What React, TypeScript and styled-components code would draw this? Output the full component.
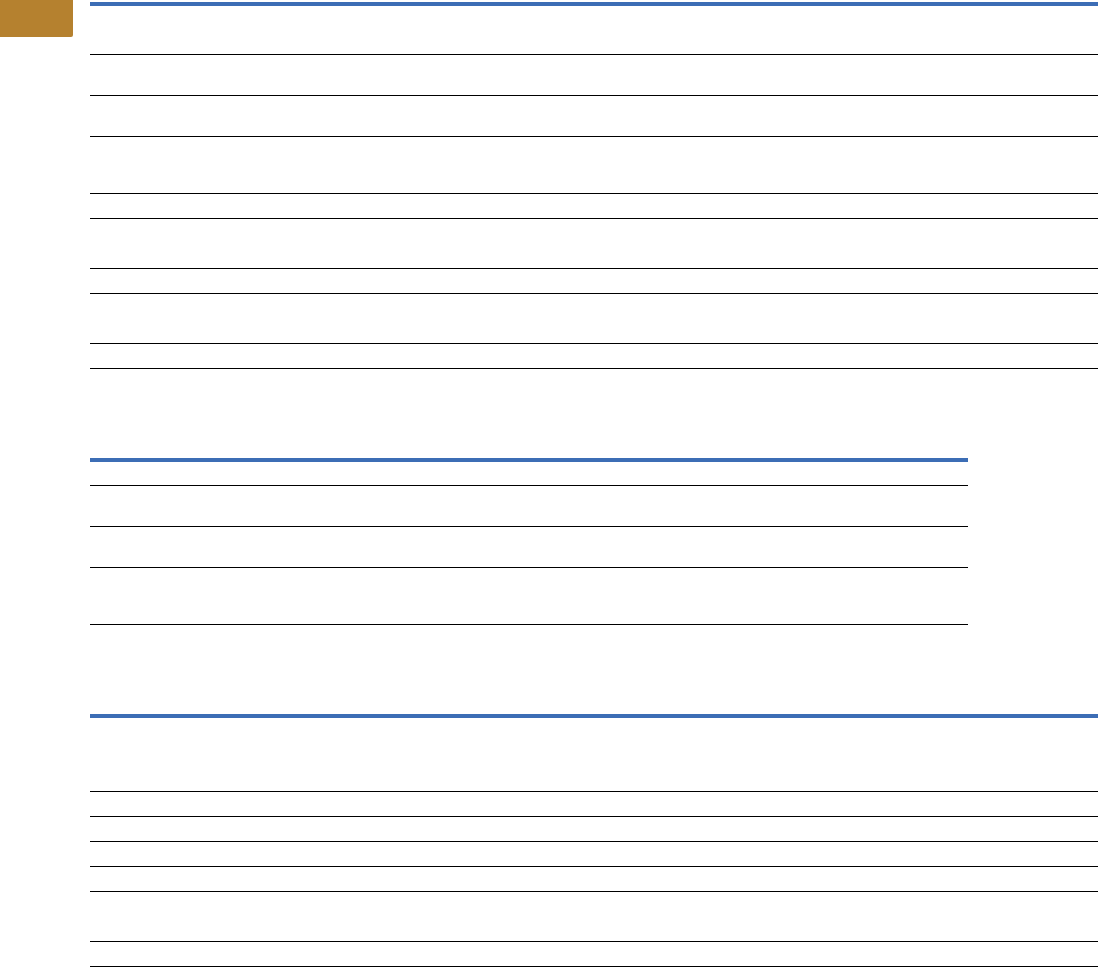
import styled, { createGlobalStyle } from 'styled-components';

const GlobalStyle = createGlobalStyle`
	html, body {
		margin: 0;
		padding: 0;
		background: #ffffff;
		font-family: 'Liberation Sans', Arial, sans-serif;
	}
`;

const tables: { width: number; header: number; rows: number[] }[] = [
	{ width: 1008, header: 48, rows: [40, 40, 56, 24, 49, 24, 49, 24] },
	{ width: 878, header: 23, rows: [40, 40, 56] },
	{ width: 1008, header: 73, rows: [24, 24, 24, 24, 49, 24] },
];

export default function App() {
	return (
		<Page>
			<GlobalStyle />
			<Aside>
				<Tab />
			</Aside>
			<Main>
				{tables.map((t, i) => (
					<Table key={i} $width={t.width}>
						<HeaderRow $height={t.header} />
						{t.rows.map((h, j) => (
							<Row key={j} $height={h} />
						))}
					</Table>
				))}
			</Main>
		</Page>
	);
}

const Page = styled.div`
	display: flex;
	width: 1098px;
	min-height: 967px;
`;

const Aside = styled.div`
	width: 90px;
	flex-shrink: 0;
`;

const Tab = styled.div`
	width: 73px;
	height: 37px;
	background-color: #b5812f;
	border-bottom-right-radius: 2px;
`;

const Main = styled.div`
	display: flex;
	flex-direction: column;
	gap: 89px;
	padding-top: 2px;
	flex: 1;
`;

const Table = styled.div<{ $width: number }>`
	display: flex;
	flex-direction: column;
	width: ${p => p.$width}px;
	border-top: 4px solid #3c6db5;
`;

const Row = styled.div<{ $height: number }>`
	height: ${p => p.$height}px;
	border-bottom: 1px solid #000000;
`;

const HeaderRow = styled(Row)``;
